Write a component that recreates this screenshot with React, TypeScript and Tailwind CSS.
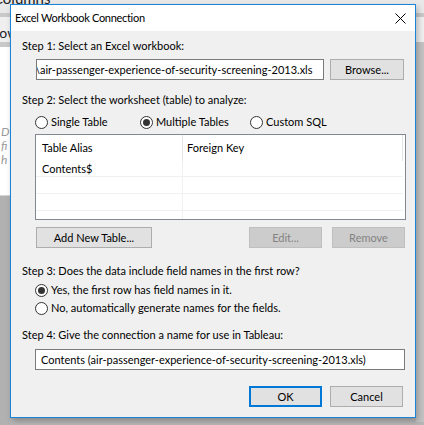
import React from "react";

const font = { fontFamily: 'Lato, "Noto Sans", sans-serif' };

function Radio({ checked, label }: { checked?: boolean; label: string }) {
  return (
    <div className="flex items-center h-[14px]">
      <div className="w-[13px] h-[13px] rounded-full border border-[#333333] bg-white flex items-center justify-center shrink-0">
        {checked && <div className="w-[7px] h-[7px] rounded-full bg-[#333333]" />}
      </div>
      <span className="ml-[3px] text-[11px] leading-[14px] text-black whitespace-nowrap">{label}</span>
    </div>
  );
}

function Btn({ label, w, disabled, primary }: { label: string; w: number; disabled?: boolean; primary?: boolean }) {
  const cls = disabled
    ? "bg-[#cccccc] border border-[#bfbfbf] text-[#838383]"
    : primary
    ? "bg-[#e1e1e1] border-2 border-[#0078d7] text-black"
    : "bg-[#e1e1e1] border border-[#adadad] text-black";
  return (
    <div
      className={`h-[21px] flex items-center justify-center text-[11px] leading-none ${cls}`}
      style={{ width: w }}
    >
      {label}
    </div>
  );
}

export default function App() {
  return (
    <div className="relative w-[424px] h-[425px] overflow-hidden bg-[#b6b6b6]" style={font}>
      {/* background application */}
      <div className="absolute inset-x-0 top-0 h-[13px] bg-[#e9e9e9] overflow-hidden">
        <span className="absolute left-[-7px] top-[-11px] text-[15px] leading-[18px] text-[#222]">Columns</span>
      </div>
      <div className="absolute inset-x-0 top-[13px] h-[4px] bg-[#c9c9c9]" />
      <div className="absolute inset-x-0 top-[17px] h-[25px] bg-[#efefef] overflow-hidden">
        <span className="absolute left-[-9px] top-[9px] text-[14px] leading-none text-[#222]">Row</span>
      </div>
      <div className="absolute left-0 w-[10px] top-[42px] h-[5px] bg-[#c9c9c9]" />
      <div className="absolute right-0 w-[8px] top-[42px] h-[380px] bg-[#c3c3c3]" />
      <div className="absolute left-0 w-[10px] top-[47px] h-[148px] bg-white overflow-hidden">
        <div className="absolute left-[1px] top-[78px] text-[12px] italic leading-[14px] text-[#9a9a9a]">
          <div>D</div>
          <div>fi</div>
          <div>h</div>
        </div>
      </div>
      <div className="absolute left-0 w-[10px] top-[195px] h-[1px] bg-[#d6d6d6]" />
      <div className="absolute left-0 w-[10px] top-[196px] h-[230px] bg-[#b1b1b1]" />

      {/* dialog */}
      <div className="absolute left-[10px] top-[4px] w-[406px] h-[414px] border border-[#1883d7] bg-[#f0f0f0] flex flex-col shadow-[2px_3px_6px_rgba(0,0,0,0.25)]">
        <div className="h-[26px] bg-white flex items-center justify-between pl-[4px] pr-[9px] shrink-0">
          <span className="text-[11px] tracking-[-0.3px] text-black">Excel Workbook Connection</span>
          <svg width="11" height="11" viewBox="0 0 11 11" className="mt-[1px]">
            <path d="M0.5 0.5 L10.5 10.5 M10.5 0.5 L0.5 10.5" stroke="#000" strokeWidth="1" />
          </svg>
        </div>

        <div className="flex flex-col pl-[11px] pr-[10px] pt-[7px] text-[11px] leading-[16px] text-black">
          <div>Step 1: Select an Excel workbook:</div>
          <div className="flex mt-[5px] ml-[14px]">
            <div className="w-[288px] h-[21px] bg-white border border-[#7a7a7a] overflow-hidden flex items-center whitespace-nowrap">
              <span className="ml-[-2px]">\air-passenger-experience-of-security-screening-2013.xls</span>
            </div>
            <div className="ml-[6px]">
              <Btn label="Browse..." w={74} />
            </div>
          </div>

          <div className="mt-[12px]">Step 2: Select the worksheet (table) to analyze:</div>
          <div className="flex mt-[7px] ml-[13px]">
            <div className="w-[105px]"><Radio label="Single Table" /></div>
            <div className="w-[110px]"><Radio checked label="Multiple Tables" /></div>
            <Radio label="Custom SQL" />
          </div>

          <div className="mt-[5px] ml-[13px] w-[371px] h-[86px] border border-[#828790] bg-white relative">
            <div className="flex h-[26px]">
              <div className="w-[147px] border-r border-[#e5e5e5] pl-[6px] flex items-center">Table Alias</div>
              <div className="flex-1 pl-[4px] flex items-center border-r border-[#e5e5e5] mr-[2px]">Foreign Key</div>
            </div>
            <div className="flex h-[16px] border-b border-[#f0f0f0] mr-[2px]">
              <div className="w-[147px] border-r border-[#f0f0f0] pl-[6px] flex items-center">Contents$</div>
              <div className="flex-1" />
            </div>
            <div className="flex h-[17px] border-b border-[#f0f0f0] mr-[2px]">
              <div className="w-[147px] border-r border-[#f0f0f0]" />
            </div>
            <div className="flex h-[17px] border-b border-[#f0f0f0] mr-[2px]">
              <div className="w-[147px] border-r border-[#f0f0f0]" />
            </div>
            <div className="flex h-[8px] mr-[2px]">
              <div className="w-[147px] border-r border-[#f0f0f0]" />
            </div>
          </div>

          <div className="flex mt-[7px] ml-[14px]">
            <Btn label="Add New Table..." w={116} />
            <div className="ml-[97px]"><Btn label="Edit..." w={73} disabled /></div>
            <div className="ml-[10px]"><Btn label="Remove" w={73} disabled /></div>
          </div>

          <div className="mt-[15px]">Step 3: Does the data include field names in the first row?</div>
          <div className="mt-[4px] ml-[13px]"><Radio checked label="Yes, the first row has field names in it." /></div>
          <div className="mt-[4px] ml-[13px]"><Radio label="No, automatically generate names for the fields." /></div>

          <div className="mt-[12px]">Step 4: Give the connection a name for use in Tableau:</div>
          <div className="mt-[6px] ml-[13px] w-[370px] h-[21px] bg-white border border-[#7a7a7a] flex items-center pl-[5px] whitespace-nowrap overflow-hidden">
            Contents (air-passenger-experience-of-security-screening-2013.xls)
          </div>

          <div className="flex mt-[16px] ml-[227px]">
            <Btn label="OK" w={73} primary />
            <div className="ml-[8px]"><Btn label="Cancel" w={73} /></div>
          </div>
        </div>
      </div>
    </div>
  );
}
